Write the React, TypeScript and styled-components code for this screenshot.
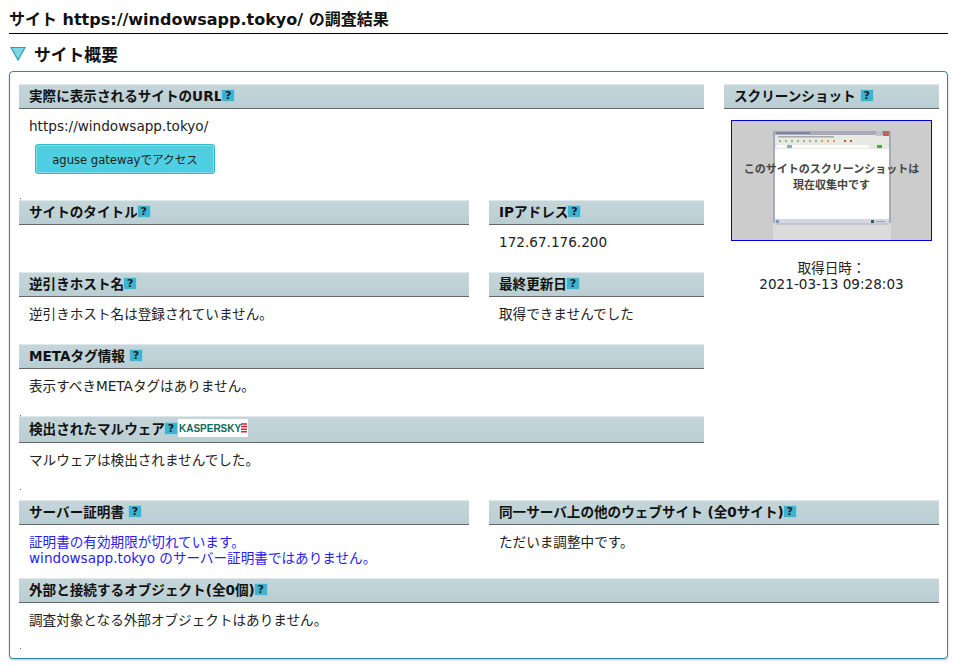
import React from "react";
import styled, { createGlobalStyle } from "styled-components";

const Global = createGlobalStyle`
  html, body { margin: 0; padding: 0; background: #fff; }
  body { font-family: "DejaVu Sans", "Noto Sans CJK JP", sans-serif; font-size: 13.6px; color: #222; }
`;
const Page = styled.div`
  width: 957px; height: 667px; box-sizing: border-box; padding: 9px 9px 0; overflow: hidden;
`;
const Title = styled.h1`
  margin: 0; height: 25px; box-sizing: border-box; line-height: 22px; font-size: 16px; font-weight: 700; color: #111;
  border-bottom: 1px solid #000;
`;
const SectionHead = styled.h2`
  margin: 0; height: 37px; display: flex; align-items: center; gap: 8px; font-size: 16.8px; font-weight: 700; color: #111;
  padding: 2px 0 0 1px; box-sizing: border-box;
`;
const Panel = styled.div`
  height: 588px; box-sizing: border-box; border: 1px solid #2f8a96; border-radius: 4px;
  padding: 12px 8px 0 9px; box-shadow: 0 1px 2px rgba(90,120,125,.45); background: #fff;
`;
const Top = styled.div`
  display: flex; gap: 20px; height: 416px;
`;
const Main = styled.div`
  width: 685px; display: flex; flex-direction: column;
`;
const Aside = styled.div`
  width: 215px;
`;
const Row = styled.div`
  display: flex; gap: 20px;
`;
const Block = styled.section<{ $w?: number; $h: number }>`
  width: ${p => (p.$w ? `${p.$w}px` : "100%")};
  height: ${p => p.$h}px; flex: none; position: relative;
`;
const Dot = styled.i<{ $top: number }>`
  position: absolute; left: 1px; top: ${p => p.$top}px; width: 1px; height: 1px; background: #55707a;
`;
const Head = styled.h3<{ $h?: number }>`
  margin: 0; box-sizing: border-box; height: ${p => p.$h ?? 25}px; display: flex; align-items: center; padding: 0 0 3px 10px;
  font-size: 13.6px; font-weight: 700; color: #111; white-space: pre;
  background: linear-gradient(#c5d6da, #b9ced3);
  border-top: 1px solid #dfe9eb; border-bottom: 1px solid #666;
`;
const Help = styled.span<{ $ml?: number }>`
  display: inline-flex; align-items: center; justify-content: center; width: 14px; height: 13px; margin-left: ${p => p.$ml ?? -1}px;
  box-sizing: border-box; background: #3fb2cd; border: 1px solid #9ed2de; color: #123; font-size: 11px; font-weight: 700;
  line-height: 1; flex: none;
`;
const Body = styled.p<{ $blue?: boolean }>`
  margin: 0; padding: 9px 0 0 10px; font-size: 13.6px; line-height: 16px; color: ${p => (p.$blue ? "#2a1cf0" : "#222")};
`;
const Btn = styled.button`
  display: block; margin: 10px 0 0 16px; width: 180px; height: 30px; padding: 0 0 1px; box-sizing: border-box;
  background: #4fcfe2; border: 1px solid #38b6cc; border-radius: 3px; box-shadow: inset 0 0 0 1px #7fdcea;
  font-family: inherit; font-size: 11.6px; color: #222;
`;
const Thumb = styled.div`
  position: relative; width: 201px; height: 121px; box-sizing: border-box; margin: 11px 0 0 7px;
  border: 1px solid #0000d8; background: #ccc; overflow: hidden;
`;
const ThumbArt = styled.svg`
  display: block; width: 199px; height: 119px;
`;
const ThumbText = styled.div`
  position: absolute; left: 0; right: 0; top: 41px; text-align: center; font-size: 11px; font-weight: 700; line-height: 16px; color: #444;
`;
const Caption = styled.div`
  margin-top: 19px; text-align: center; font-size: 13.6px; line-height: 16px; color: #222;
`;
const Kaspersky = styled.span`
  display: inline-flex; align-items: center; justify-content: space-between; width: 70px; height: 18px; background: #fff; color: #0d6b5e; font-size: 10px;
  font-weight: 700; white-space: nowrap; font-family: "Liberation Sans", sans-serif; box-sizing: border-box; padding: 0 1px;
  & svg { flex: none; }
`;

export default function App() {
  return (
    <Page>
      <Global />
      <Title>サイト https://windowsapp.tokyo/ の調査結果</Title>
      <SectionHead>
        <svg width="16" height="15" viewBox="0 0 16 15"><path d="M1 1.5h14L8 14z" fill="#7fd6e6" stroke="#2d9db2" strokeWidth="1.2" /></svg>
        サイト概要
      </SectionHead>
      <Panel>
        <Top>
          <Main>
            <Block $h={116}>
              <Head>実際に表示されるサイトのURL<Help>?</Help></Head>
              <Body>https://windowsapp.tokyo/</Body>
              <Btn>aguse gatewayでアクセス</Btn>
            </Block>
            <Row>
              <Block $w={450} $h={72}>
                <Dot $top={-2} />
                <Head>サイトのタイトル<Help>?</Help></Head>
              </Block>
              <Block $w={215} $h={72}>
                <Head>IPアドレス<Help>?</Help></Head>
                <Body>172.67.176.200</Body>
              </Block>
            </Row>
            <Row>
              <Block $w={450} $h={72}>
                <Head>逆引きホスト名<Help>?</Help></Head>
                <Body>逆引きホスト名は登録されていません。</Body>
              </Block>
              <Block $w={215} $h={72}>
                <Head>最終更新日<Help>?</Help></Head>
                <Body>取得できませんでした</Body>
              </Block>
            </Row>
            <Block $h={72}>
              <Head>METAタグ情報<Help $ml={4}>?</Help></Head>
              <Body>表示すべきMETAタグはありません。</Body>
            </Block>
            <Block $h={84}>
              <Dot $top={-1} />
              <Head $h={27}>検出されたマルウェア<Help>?</Help>
                <Kaspersky>
                  KASPERSKY
                  <svg width="6" height="10" viewBox="0 0 6 10"><path d="M0 1h6M0 3.6h6M0 6.2h6M0 8.8h6" stroke="#d8232f" strokeWidth="1.5" /></svg>
                </Kaspersky>
              </Head>
              <Body>マルウェアは検出されませんでした。</Body>
              <Dot $top={73} />
            </Block>
          </Main>
          <Aside>
            <Block $h={35}>
              <Head>スクリーンショット<Help $ml={4}>?</Help></Head>
              <Thumb>
                <ThumbArt viewBox="0 0 199 119">
                  <rect x="41" y="10" width="118" height="92" fill="#a9a9bc" />
                  <rect x="43" y="14" width="114" height="14" fill="#e9e9e4" />
                  <rect x="43" y="28" width="114" height="70" fill="#fff" />
                  <rect x="43" y="98" width="114" height="4" fill="#d6d6e2" />
                  <rect x="41" y="102" width="118" height="17" fill="#dcdcdc" />
                  <rect x="43" y="102" width="114" height="2" fill="#c4c4cc" />
                  <rect x="44" y="11" width="34" height="2" fill="#7f86a8" />
                  <rect x="151" y="10" width="6" height="5" fill="#c9605c" />
                  <rect x="144" y="10" width="6" height="5" fill="#c0c0cc" />
                  <rect x="46" y="15" width="56" height="1.5" fill="#a8a8a4" />
                  <path d="M47 20h2M53 20h2M59 20h2M65 20h2M71 20h2M77 20h2M83 20h2" stroke="#8fb88f" strokeWidth="2" />
                  <path d="M89 20h2M95 20h2M101 20h2" stroke="#d9a04e" strokeWidth="2" />
                  <path d="M112 20h2M118 20h2" stroke="#c94c4c" strokeWidth="2" />
                  <rect x="45" y="24" width="92" height="3" fill="#fbfbfb" />
                  <rect x="55" y="24" width="5" height="3" fill="#8aa6cc" />
                  <rect x="145" y="24" width="5" height="3" fill="#4aa84a" />
                  <rect x="44" y="99" width="3" height="3" fill="#6f9ac8" />
                  <rect x="139" y="99" width="3" height="3" fill="#2d5a70" />
                  <rect x="144" y="100" width="9" height="1" fill="#9a9aa4" />
                </ThumbArt>
                <ThumbText>このサイトのスクリーンショットは<br />現在収集中です</ThumbText>
              </Thumb>
              <Caption>取得日時：<br />2021-03-13 09:28:03</Caption>
            </Block>
          </Aside>
        </Top>
        <Row>
          <Block $w={450} $h={78}>
            <Head>サーバー証明書<Help $ml={4}>?</Help></Head>
            <Body $blue>証明書の有効期限が切れています。<br />windowsapp.tokyo のサーバー証明書ではありません。</Body>
          </Block>
          <Block $w={450} $h={78}>
            <Head>同一サーバ上の他のウェブサイト (全0サイト)<Help>?</Help></Head>
            <Body>ただいま調整中です。</Body>
          </Block>
        </Row>
        <Block $h={70}>
          <Head>外部と接続するオブジェクト(全0個)<Help>?</Help></Head>
          <Body>調査対象となる外部オブジェクトはありません。</Body>
          <Dot $top={70} />
        </Block>
      </Panel>
    </Page>
  );
}
